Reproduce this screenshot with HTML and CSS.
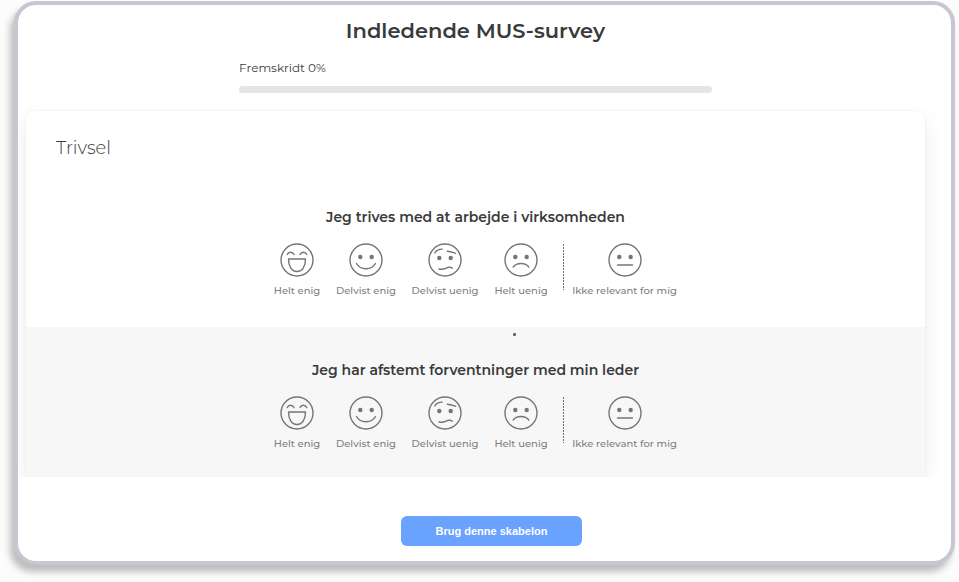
FILE: index.html
```html
<!DOCTYPE html>
<html lang="da">
<head>
<meta charset="utf-8">
<meta name="viewport" content="width=device-width, initial-scale=1">
<title>Indledende MUS-survey</title>
<link rel="stylesheet" href="styles.css">
</head>
<body>
<svg class="sprite" aria-hidden="true">
  <symbol id="face-laugh" viewBox="0 0 34 34">
    <circle cx="17" cy="17" r="16"/>
    <path d="M7.2 11.5C8.6 8.5 12.6 8.5 14 11.5M20 11.5C21.4 8.5 25.4 8.5 26.8 11.5"/>
    <path d="M8.5 16H25.5C25.5 23 22.5 28.5 17 28.5S8.500 23 8.500 16Z"/>
  </symbol>
  <symbol id="face-smile" viewBox="0 0 34 34">
    <circle cx="17" cy="17" r="16"/>
    <circle class="eye" cx="11.300" cy="14" r="2.200"/><circle class="eye" cx="22.700" cy="14" r="2.200"/>
    <path d="M7.500 20.500C11.500 27.500 22.500 27.500 26.500 20.500"/>
  </symbol>
  <symbol id="face-unsure" viewBox="0 0 34 34">
    <circle cx="17" cy="17" r="16"/>
    <circle class="eye" cx="11.300" cy="15" r="2.200"/><circle class="eye" cx="22.700" cy="15" r="2.200"/>
    <path d="M6.800 9.800C8.300 7.400 10.800 6.200 14.200 6.100M19.400 8.200C22 8.300 24.300 9.200 27.500 10.300"/>
    <path d="M11 26C16 27.200 18 24.800 20.500 24.300C22 24 23.400 24.500 24.300 25.200"/>
  </symbol>
  <symbol id="face-sad" viewBox="0 0 34 34">
    <circle cx="17" cy="17" r="16"/>
    <circle class="eye" cx="11.300" cy="14" r="2.200"/><circle class="eye" cx="22.700" cy="14" r="2.200"/>
    <path d="M9.200 24C12.500 19.300 21.500 19.300 24.800 24"/>
  </symbol>
  <symbol id="face-neutral" viewBox="0 0 34 34">
    <circle cx="17" cy="17" r="16"/>
    <circle class="eye" cx="11.300" cy="14" r="2.200"/><circle class="eye" cx="22.700" cy="14" r="2.200"/>
    <path d="M9.500 22H24.500"/>
  </symbol>
</svg>
<main class="frame">
  <header class="header">
    <h1 class="title">Indledende MUS-survey</h1>
    <div class="progress">
      <label class="progress-label" for="progress">Fremskridt 0%</label>
      <progress class="progress-bar" id="progress" value="0" max="100"></progress>
    </div>
  </header>
  <div class="preview">
    <form class="card" id="survey">
      <h2 class="section-title">Trivsel</h2>
      <fieldset class="question">
        <legend class="question-title">Jeg trives med at arbejde i virksomheden</legend>
        <div class="options">
          <label class="option"><input type="radio" name="q1"><svg class="face"><use href="#face-laugh"/></svg><span>Helt enig</span></label>
          <label class="option"><input type="radio" name="q1"><svg class="face"><use href="#face-smile"/></svg><span>Delvist enig</span></label>
          <label class="option"><input type="radio" name="q1"><svg class="face"><use href="#face-unsure"/></svg><span>Delvist uenig</span></label>
          <label class="option"><input type="radio" name="q1"><svg class="face"><use href="#face-sad"/></svg><span>Helt uenig</span></label>
          <label class="option option-na"><input type="radio" name="q1"><svg class="face"><use href="#face-neutral"/></svg><span>Ikke relevant for mig</span></label>
        </div>
      </fieldset>
      <fieldset class="question question-alt">
        <legend class="question-title">Jeg har afstemt forventninger med min leder</legend>
        <div class="options">
          <label class="option"><input type="radio" name="q2"><svg class="face"><use href="#face-laugh"/></svg><span>Helt enig</span></label>
          <label class="option"><input type="radio" name="q2"><svg class="face"><use href="#face-smile"/></svg><span>Delvist enig</span></label>
          <label class="option"><input type="radio" name="q2"><svg class="face"><use href="#face-unsure"/></svg><span>Delvist uenig</span></label>
          <label class="option"><input type="radio" name="q2"><svg class="face"><use href="#face-sad"/></svg><span>Helt uenig</span></label>
          <label class="option option-na"><input type="radio" name="q2"><svg class="face"><use href="#face-neutral"/></svg><span>Ikke relevant for mig</span></label>
        </div>
      </fieldset>
    </form>
  </div>
  <footer class="footer">
    <button class="cta" type="submit" form="survey">Brug denne skabelon</button>
  </footer>
</main>
</body>
</html>
```
FILE: styles.css
```css
* { box-sizing: border-box; }

body {
  margin: 0;
  padding: 1px 4px 17px 14px;
  background: #fcfcfc;
  color: #3a3a3a;
  font-family: Montserrat, Inter, sans-serif;
}

.sprite {
  position: absolute;
  width: 0;
  height: 0;
}

.frame {
  border: 4px solid #c9c5d1;
  border-radius: 22px;
  background: #fff;
  box-shadow: -4px 7px 7px rgba(0, 0, 0, 0.25);
  overflow: hidden;
}

.header {
  display: flex;
  flex-direction: column;
  align-items: center;
  padding: 12px 26px 0 8px;
}

.title {
  margin: 0;
  font-size: 21px;
  line-height: 28px;
  font-weight: 600;
}

.progress {
  display: flex;
  flex-direction: column;
  gap: 10px;
  width: 100%;
  max-width: 473px;
  margin-top: 15px;
}

.progress-label {
  font-size: 12px;
  line-height: 16px;
}

.progress-bar {
  appearance: none;
  display: block;
  width: 100%;
  height: 7px;
  border: 0;
  border-radius: 4px;
  background: #e5e5e5;
  overflow: hidden;
}

.progress-bar::-webkit-progress-bar { background: #e5e5e5; }
.progress-bar::-webkit-progress-value { background: #69a2ff; }

.preview {
  padding: 18px 26px 0 8px;
  overflow: hidden;
}

.card {
  border-radius: 8px 8px 0 0;
  background: #fff;
  box-shadow: 0 8px 20px rgba(0, 0, 0, 0.08), 0 0 2px rgba(0, 0, 0, 0.08);
  overflow: hidden;
}

.section-title {
  margin: 0;
  padding: 25px 30px 23px;
  font-size: 18px;
  line-height: 24px;
  font-weight: 300;
}

.question {
  display: flex;
  flex-direction: column;
  align-items: center;
  min-width: 0;
  margin: 0;
  padding: 24px 0 29px;
  border: 0;
}

/* Floating the legend makes it an ordinary item of the fieldset's column. */
.question-title {
  float: left;
  padding: 0;
  font-size: 14px;
  line-height: 20px;
  font-weight: 600;
}

.question-alt {
  position: relative;
  padding: 33px 0 26px;
  background: #f7f7f7;
}

.question-alt::before {
  content: "";
  position: absolute;
  top: 6px;
  left: calc(50% + 37px);
  width: 3px;
  height: 3px;
  border-radius: 1px;
  background: #666;
}

.options {
  display: grid;
  grid-template-columns: 48px 62px 68px 56px 115px;
  column-gap: 14px;
  padding-top: 16px;
}

.option {
  position: relative;
  display: flex;
  flex-direction: column;
  align-items: center;
  gap: 7px;
  color: #808080;
  font-size: 10px;
  line-height: 14px;
  font-weight: 500;
  white-space: nowrap;
  cursor: pointer;
}

.option input {
  position: absolute;
  inset: 0;
  width: 100%;
  height: 100%;
  margin: 0;
  opacity: 0;
  cursor: pointer;
}

.option-na { padding-left: 8px; }

.option-na::before {
  content: "";
  position: absolute;
  top: 1px;
  bottom: 8px;
  left: 0;
  width: 1px;
  background: repeating-linear-gradient(#707070 0 2px, transparent 2px 3px);
}

.face {
  width: 34px;
  height: 34px;
  fill: none;
  stroke: #757575;
  stroke-width: 1.4;
  stroke-linecap: round;
  stroke-linejoin: round;
}

.eye {
  fill: #757575;
  stroke: none;
}

.footer {
  display: flex;
  justify-content: center;
  padding: 39px 0 15px 14px;
}

.cta {
  padding: 8px 35px;
  border: 0;
  border-radius: 6px;
  background: #69a2ff;
  color: #fff;
  font-family: "Liberation Sans", Arial, sans-serif;
  font-size: 11px;
  line-height: 14px;
  font-weight: 700;
  cursor: pointer;
}
```
